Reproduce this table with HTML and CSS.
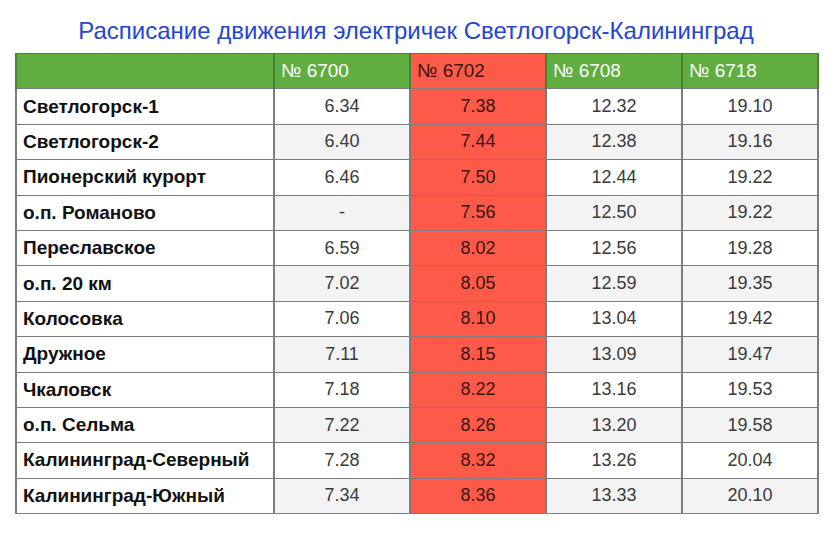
FILE: index.html
```html
<!DOCTYPE html>
<html lang="ru">
<head>
<meta charset="utf-8">
<link rel="stylesheet" href="styles.css">
</head>
<body>
<div class="page">
  <h1 class="title">Расписание движения электричек Светлогорск-Калининград</h1>
  <table class="sched">
    <colgroup>
      <col class="c-station"><col class="c-num"><col class="c-num"><col class="c-num"><col class="c-num">
    </colgroup>
    <thead>
      <tr>
        <th class="h-empty"></th>
        <th>№ 6700</th>
        <th class="red">№ 6702</th>
        <th>№ 6708</th>
        <th>№ 6718</th>
      </tr>
    </thead>
    <tbody>
      <tr><td class="st">Светлогорск-1</td><td>6.34</td><td class="red">7.38</td><td>12.32</td><td>19.10</td></tr>
      <tr><td class="st">Светлогорск-2</td><td>6.40</td><td class="red">7.44</td><td>12.38</td><td>19.16</td></tr>
      <tr><td class="st">Пионерский курорт</td><td>6.46</td><td class="red">7.50</td><td>12.44</td><td>19.22</td></tr>
      <tr><td class="st">о.п. Романово</td><td>-</td><td class="red">7.56</td><td>12.50</td><td>19.22</td></tr>
      <tr><td class="st">Переславское</td><td>6.59</td><td class="red">8.02</td><td>12.56</td><td>19.28</td></tr>
      <tr><td class="st">о.п. 20 км</td><td>7.02</td><td class="red">8.05</td><td>12.59</td><td>19.35</td></tr>
      <tr><td class="st">Колосовка</td><td>7.06</td><td class="red">8.10</td><td>13.04</td><td>19.42</td></tr>
      <tr><td class="st">Дружное</td><td>7.11</td><td class="red">8.15</td><td>13.09</td><td>19.47</td></tr>
      <tr><td class="st">Чкаловск</td><td>7.18</td><td class="red">8.22</td><td>13.16</td><td>19.53</td></tr>
      <tr><td class="st">о.п. Сельма</td><td>7.22</td><td class="red">8.26</td><td>13.20</td><td>19.58</td></tr>
      <tr><td class="st">Калининград-Северный</td><td>7.28</td><td class="red">8.32</td><td>13.26</td><td>20.04</td></tr>
      <tr><td class="st">Калининград-Южный</td><td>7.34</td><td class="red">8.36</td><td>13.33</td><td>20.10</td></tr>
    </tbody>
  </table>
</div>
</body>
</html>
```
FILE: styles.css
```css
html, body {
  margin: 0;
  padding: 0;
  background: #ffffff;
}
body {
  font-family: "Liberation Sans", Arial, sans-serif;
}
.page {
  width: 840px;
  height: 533px;
  padding: 17px 0 0 15px;
  box-sizing: border-box;
}
.title {
  margin: 0 0 8px 0;
  width: 802px;
  text-align: center;
  font-size: 24px;
  font-weight: normal;
  line-height: 28px;
  color: #2446d0;
}
.sched {
  border-collapse: collapse;
  table-layout: fixed;
  width: 802px;
  font-size: 19px;
}
.c-station { width: 258px; }
.c-num { width: 136px; }
.sched th, .sched td {
  height: 35.4px;
  padding: 0 6px;
  border-top: 1px solid #7d7d7d;
  border-bottom: 1px solid #7d7d7d;
  border-left: 2px solid #7d7d7d;
  border-right: 2px solid #7d7d7d;
  box-sizing: border-box;
}
.sched th {
  background: #61ae40;
  color: #ffffff;
  font-weight: normal;
  text-align: left;
  border-color: #4a7f36 #4a7f36 #7d7d7d #4a7f36;
}
.sched td {
  text-align: center;
  font-size: 18px;
  color: #3a3a3a;
  background: #ffffff;
}
.sched tbody tr:nth-child(even) td {
  background: #f3f3f3;
}
.sched td.st {
  text-align: left;
  font-size: 19px;
  font-weight: bold;
  color: #111111;
  background: #ffffff;
}
.sched tbody tr:nth-child(even) td.st {
  background: #ffffff;
}
.sched th.red,
.sched td.red,
.sched tbody tr:nth-child(even) td.red {
  background: #fe5a4a;
  color: #3a1410;
}
```
